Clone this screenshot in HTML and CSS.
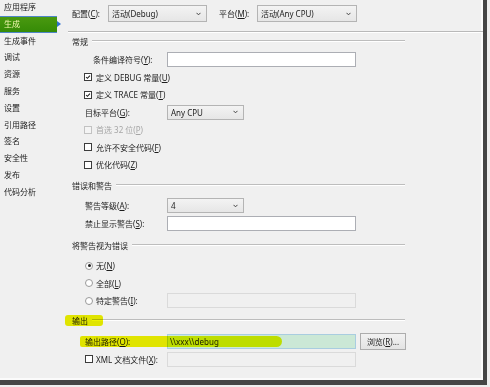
FILE: index.html
```html
<!DOCTYPE html>
<html lang="zh-CN">
<head>
<meta charset="utf-8">
<title>生成</title>
<link rel="stylesheet" href="styles.css">
</head>
<body>
<div class="frame">
  <div class="window">
    <nav class="sidebar">
      <ul class="tabs">
        <li>应用程序</li>
        <li class="active">生成</li>
        <li>生成事件</li>
        <li>调试</li>
        <li>资源</li>
        <li>服务</li>
        <li>设置</li>
        <li>引用路径</li>
        <li>签名</li>
        <li>安全性</li>
        <li>发布</li>
        <li>代码分析</li>
      </ul>
    </nav>
    <main class="content">
      <div class="topbar">
        <span class="top-label">配置(<u>C</u>):</span>
        <div class="select sel-config"><span>活动(Debug)</span><svg class="chev" viewBox="0 0 6 4"><path d="M0.6 0.6 L3 3 L5.4 0.6"/></svg></div>
        <span class="top-label lbl-platform">平台(<u>M</u>):</span>
        <div class="select sel-platform"><span>活动(Any CPU)</span><svg class="chev" viewBox="0 0 6 4"><path d="M0.6 0.6 L3 3 L5.4 0.6"/></svg></div>
      </div>
      <div class="separator"></div>

      <section class="group g-general">
        <div class="group-header"><span>常规</span><i class="rule"></i></div>
        <div class="rows">
          <div class="row"><span class="label label-indent">条件编译符号(<u>Y</u>):</span><div class="textbox"></div></div>
          <div class="row check-row"><span class="check checked"><svg viewBox="0 0 8 8"><path d="M1.4 4 L3.2 5.8 L6.6 2.1"/></svg></span><span>定义 DEBUG 常量(<u>U</u>)</span></div>
          <div class="row check-row"><span class="check checked"><svg viewBox="0 0 8 8"><path d="M1.4 4 L3.2 5.8 L6.6 2.1"/></svg></span><span>定义 TRACE 常量(<u>T</u>)</span></div>
          <div class="row"><span class="label">目标平台(<u>G</u>):</span><div class="select sel-small"><span>Any CPU</span><svg class="chev" viewBox="0 0 6 4"><path d="M0.6 0.6 L3 3 L5.4 0.6"/></svg></div></div>
          <div class="row check-row disabled"><span class="check"></span><span>首选 32 位(<u>P</u>)</span></div>
          <div class="row check-row"><span class="check"></span><span>允许不安全代码(<u>F</u>)</span></div>
          <div class="row check-row"><span class="check"></span><span>优化代码(<u>Z</u>)</span></div>
        </div>
      </section>

      <section class="group g-errors">
        <div class="group-header"><span>错误和警告</span><i class="rule"></i></div>
        <div class="rows">
          <div class="row"><span class="label">警告等级(<u>A</u>):</span><div class="select sel-small"><span>4</span><svg class="chev" viewBox="0 0 6 4"><path d="M0.6 0.6 L3 3 L5.4 0.6"/></svg></div></div>
          <div class="row"><span class="label">禁止显示警告(<u>S</u>):</span><div class="textbox"></div></div>
        </div>
      </section>

      <section class="group g-treat">
        <div class="group-header"><span>将警告视为错误</span><i class="rule"></i></div>
        <div class="rows">
          <div class="row radio-row"><span class="radio on"></span><span>无(<u>N</u>)</span></div>
          <div class="row radio-row"><span class="radio"></span><span>全部(<u>L</u>)</span></div>
          <div class="row radio-row"><span class="radio"></span><span class="label-after">特定警告(<u>I</u>):</span><div class="textbox disabled-box"></div></div>
        </div>
      </section>

      <section class="group g-output">
        <div class="group-header marked"><span class="marker marker-head"></span><span class="head-text">输出</span><i class="rule"></i></div>
        <div class="rows">
          <div class="row row-tall marked"><span class="marker marker-path"></span><span class="label">输出路径(<u>O</u>):</span><div class="textbox path-box"><span>\\xxx\\debug</span></div><button class="btn" type="button">浏览(<u>R</u>)...</button></div>
          <div class="row row-tall xml-row"><span class="check"></span><span class="label-after">XML 文档文件(<u>X</u>):</span><div class="textbox disabled-box"></div></div>
        </div>
      </section>
    </main>
  </div>
</div>
</body>
</html>
```

FILE: styles.css
```css
html, body {
  margin: 0;
  padding: 0;
}

body {
  width: 490px;
  height: 387px;
  background: #eeeeee;
  font-family: "Noto Sans", "Noto Sans CJK SC", sans-serif;
  font-size: 8px;
  color: #1c1c1c;
  overflow: hidden;
}

u {
  text-decoration: underline;
  text-underline-offset: 1px;
}

.frame {
  width: 487px;
  height: 385px;
  background: #454545;
  padding: 0 4px 5px 0;
  box-sizing: border-box;
}

.window {
  width: 483px;
  height: 380px;
  background: #f0f0f0;
  display: flex;
  box-shadow: inset -2px -2px 0 #fbfbfb;
}

/* ---------- sidebar ---------- */
.sidebar {
  width: 64px;
  flex: none;
}

.tabs {
  list-style: none;
  margin: -1px 0 0 0;
  padding: 0;
}

.tabs li {
  height: 16.8px;
  line-height: 16.8px;
  padding-left: 4px;
  white-space: nowrap;
}

.tabs li.active {
  position: relative;
  width: 53px;
  background: linear-gradient(#4b9a10, #348a06);
  color: #f2f7b0;
  box-shadow: inset 0 1px 0 #4f86c8, inset 0 -1px 0 #4f86c8;
}

.tabs li.active::after {
  content: "";
  position: absolute;
  left: 100%;
  top: 50%;
  margin-top: -3.5px;
  border-left: 4px solid #2f6fd0;
  border-top: 3.5px solid transparent;
  border-bottom: 3.5px solid transparent;
}

/* ---------- content ---------- */
.content {
  flex: 1;
  display: flex;
  flex-direction: column;
}

.topbar {
  height: 31px;
  padding: 5px 0 0 8px;
  box-sizing: border-box;
  display: flex;
  align-items: flex-start;
}

.top-label {
  width: 36px;
  height: 17px;
  line-height: 17px;
  flex: none;
}

.lbl-platform {
  margin-left: 12px;
  width: 38px;
}

.select {
  height: 17px;
  box-sizing: border-box;
  border: 1px solid #b4b4b4;
  background: linear-gradient(#f3f3f3, #e6e6e6);
  display: flex;
  align-items: center;
  justify-content: space-between;
  padding: 0 5px 0 3px;
  flex: none;
}

.sel-config { width: 99px; }
.sel-platform { width: 100px; }
.sel-small { width: 77px; height: 15px; }

.chev {
  width: 5px;
  height: 4px;
  fill: none;
  stroke: #444;
  stroke-width: 1.2;
}

.separator {
  margin-left: 4px;
  height: 0;
  border-top: 1px solid #b9b9b9;
  border-bottom: 1px solid #ffffff;
}

/* ---------- groups ---------- */
.group-header {
  position: relative;
  width: 333px;
  height: 16px;
  padding-left: 8px;
  display: flex;
  align-items: center;
}

.group-header span {
  white-space: nowrap;
}

.rule {
  flex: 1;
  height: 0;
  margin-left: 4px;
  border-top: 1px solid #bdbdbd;
  border-bottom: 1px solid #ffffff;
}

.rows {
  margin-top: 2px;
}

.g-errors { margin-top: 3.5px; }
.g-treat { margin-top: 5px; }
.g-output { margin-top: 2.5px; }

.g-errors .rows,
.g-treat .rows,
.g-output .rows { margin-top: 4px; }

.row {
  position: relative;
  height: 17.5px;
  display: flex;
  align-items: center;
  padding-left: 21px;
  white-space: nowrap;
}

.row-tall { height: 18px; }

.label {
  width: 82px;
  flex: none;
}

.label-indent {
  padding-left: 8px;
  width: 74px;
}

.label-after {
  width: 71px;
  flex: none;
}

.textbox {
  width: 189px;
  height: 15px;
  box-sizing: border-box;
  border: 1px solid #acaeb4;
  background: #ffffff;
  flex: none;
  display: flex;
  align-items: center;
  padding-left: 2px;
}

.disabled-box {
  background: #f0f0f0;
  border-color: #dadada;
}

.path-box {
  background: #cbe8d6;
  border-color: #a9cde0;
}

.check-row { padding-left: 20px; }
.xml-row { padding-left: 21px; }

.check {
  width: 8px;
  height: 8px;
  box-sizing: border-box;
  border: 1px solid #3c3c3c;
  background: #ffffff;
  margin-right: 4px;
  flex: none;
  display: flex;
}

.xml-row .check { margin-right: 3px; }

.check svg {
  width: 6px;
  height: 6px;
  fill: none;
  stroke: #1e1e1e;
  stroke-width: 1.4;
}

.disabled {
  color: #a6a6a6;
}

.disabled .check {
  border-color: #c2c2c2;
  background: #f4f4f4;
}

.radio {
  width: 8px;
  height: 8px;
  box-sizing: border-box;
  border-radius: 50%;
  border: 1px solid #9a9a9a;
  background: #ffffff;
  margin-right: 3px;
  flex: none;
  position: relative;
}

.radio.on::after {
  content: "";
  position: absolute;
  left: 1.5px;
  top: 1.5px;
  width: 3px;
  height: 3px;
  border-radius: 50%;
  background: #1e1e1e;
}

.btn {
  margin: 0 0 0 4px;
  width: 46px;
  height: 17px;
  padding: 0;
  box-sizing: border-box;
  border: 1px solid #adadad;
  background: linear-gradient(#f2f2f2, #e3e3e3);
  font: inherit;
  color: #1c1c1c;
  flex: none;
}

/* ---------- highlighter marks ---------- */
.marked > *:not(.marker) {
  position: relative;
}

.marker {
  position: absolute;
  mix-blend-mode: multiply;
  z-index: 2;
  background: #eef300;
}

.marker-head {
  left: 1px;
  top: 3px;
  width: 38px;
  height: 11px;
  border-radius: 3px;
}

.marker-path {
  left: 16px;
  top: 4px;
  width: 202px;
  height: 11px;
  border-radius: 3px 8px 8px 3px;
}
```
